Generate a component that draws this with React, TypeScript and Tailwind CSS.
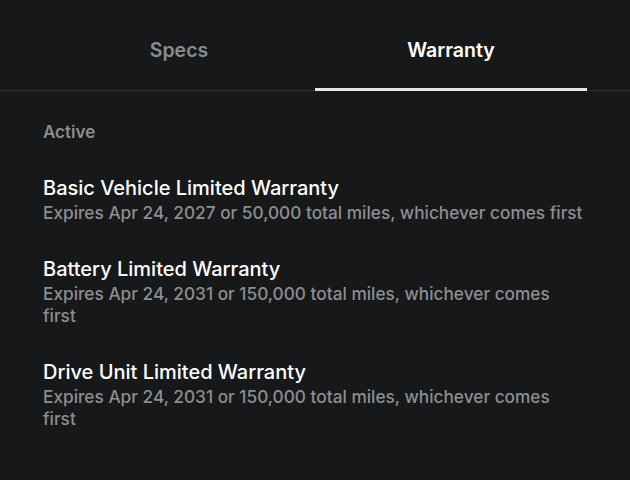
const warranties = [
  {
    title: 'Basic Vehicle Limited Warranty',
    detail: 'Expires Apr 24, 2027 or 50,000 total miles, whichever comes first',
  },
  {
    title: 'Battery Limited Warranty',
    detail: 'Expires Apr 24, 2031 or 150,000 total miles, whichever comes first',
  },
  {
    title: 'Drive Unit Limited Warranty',
    detail: 'Expires Apr 24, 2031 or 150,000 total miles, whichever comes first',
  },
]

export default function App() {
  return (
    <div
      className="min-h-screen w-[630px] h-[480px] bg-[#17181a] text-white overflow-hidden"
      style={{ fontFamily: 'Inter, "Noto Sans", sans-serif' }}
    >
      {/* Tabs */}
      <div className="border-b border-[#2e2f31]">
        <div className="grid grid-cols-2 px-[43px]">
          <button className="h-[91px] pt-[14px] flex items-center justify-center text-[19.5px] font-semibold text-[#8b8c8e] border-b-[3px] border-transparent -mb-px">
            Specs
          </button>
          <button className="h-[91px] pt-[14px] flex items-center justify-center text-[19.5px] font-semibold text-white border-b-[3px] border-[#e4e4e4] -mb-px">
            Warranty
          </button>
        </div>
      </div>

      {/* Warranty list */}
      <div className="px-[43px] pt-[31px]">
        <div className="text-[17px] font-semibold text-[#8b8c8e] leading-5">Active</div>
        <div className="mt-[32px] space-y-[30px]">
          {warranties.map((w) => (
            <div key={w.title}>
              <div className="text-[20px] font-medium leading-[28px] text-white">{w.title}</div>
              <div className="text-[17.25px] font-medium leading-[22.5px] text-[#8d8e90]">{w.detail}</div>
            </div>
          ))}
        </div>
      </div>
    </div>
  )
}
